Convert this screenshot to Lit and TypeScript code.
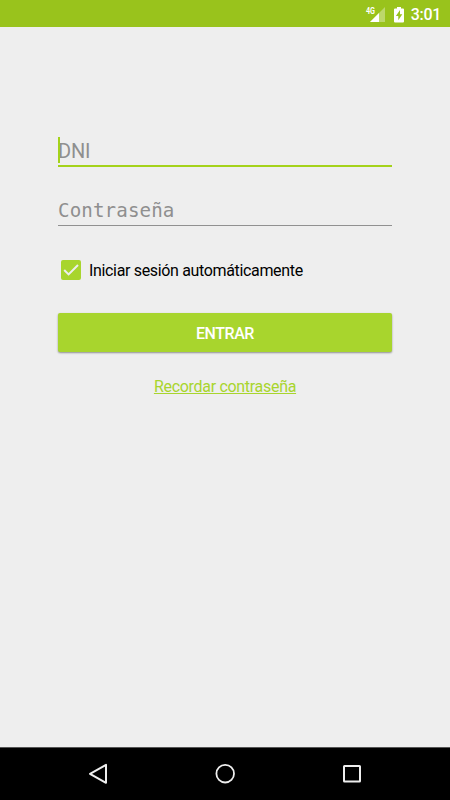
import { LitElement, html, css } from "lit";
import { customElement } from "lit/decorators.js";

@customElement("app-root")
export class AppRoot extends LitElement {
  static styles = css`
    :host {
      display: flex;
      flex-direction: column;
      height: 800px;
      background: #eeeeee;
      color: #000;
      font-family: Roboto, "Liberation Sans", sans-serif;
      overflow: hidden;
    }
    * { box-sizing: border-box; }
    svg { display: block; flex: none; overflow: visible; }
    .status {
      height: 27px;
      flex: none;
      display: flex;
      justify-content: flex-end;
      align-items: center;
      padding: 2px 9px 0 0;
      background: #99c31c;
      color: #fff;
    }
    .signal { margin-right: 9px; }
    .net { font: 700 9px Roboto, sans-serif; fill: #fff; }
    .time { font-size: 16px; letter-spacing: -0.3px; font-weight: 500; line-height: 24px; margin-left: 7px; }
    main { flex: 1; padding: 107px 58px 0; }
    .field {
      position: relative;
      font-size: 20px;
      line-height: 24px;
      color: #8f8f8f;
    }
    .dni { height: 33px; padding-top: 5px; border-bottom: 2px solid #a4d21a; letter-spacing: -0.2px; }
    .caret {
      position: absolute;
      left: 0;
      top: 3px;
      width: 2px;
      height: 26px;
      background: #a4d21a;
    }
    .pass {
      height: 29px;
      margin-top: 30px;
      padding-top: 2px;
      border-bottom: 1px solid #909090;
      font-family: "DejaVu Sans Mono", monospace;
      font-size: 19.2px;
      letter-spacing: 0.1px;
    }
    .check {
      display: flex;
      align-items: center;
      height: 20px;
      margin: 34px 0 0 3px;
      gap: 8px;
      font-size: 16px;
      letter-spacing: -0.34px;
      line-height: 20px;
      white-space: nowrap;
    }
    .check span { padding-top: 2px; }
    .enter {
      display: block;
      width: 334px;
      height: 39px;
      margin-top: 33px;
      padding: 2px 0 0;
      border: 0;
      border-radius: 2px;
      background: #a8d52d;
      box-shadow: 0 1px 2px rgba(0, 0, 0, 0.4);
      color: #fff;
      font: 500 16px/20px Roboto, sans-serif;
      letter-spacing: -0.45px;
    }
    .forgot {
      display: block;
      margin-top: 25px;
      text-align: center;
      font-size: 16px;
      letter-spacing: -0.3px;
      line-height: 20px;
      color: #a8d52d;
      text-decoration: underline;
      text-decoration-thickness: 1px;
    }
    nav {
      height: 53px;
      flex: none;
      background: #000;
      border-top: 1px solid #555;
      display: flex;
      justify-content: center;
      gap: 103px;
      padding-top: 14px;
    }
  `;

  render() {
    return html`
      <div class="status">
        <svg class="signal" width="20" height="16" viewBox="0 0 20 16">
          <path d="M20 0V15H5Z" fill="#fff" fill-opacity=".35" />
          <path d="M14 6V15H5Z" fill="#fff" />
          <text class="net" x="1" y="7" textLength="9" lengthAdjust="spacingAndGlyphs">4G</text>
        </svg>
        <svg width="10" height="16" viewBox="0 0 10 16">
          <path d="M3 0H7V1.5H9Q10 1.5 10 2.5V14.5Q10 15.5 9 15.5H1Q0 15.5 0 14.5V2.5Q0 1.5 1 1.5H3Z" fill="#fff" />
          <path d="M6 3L1.9 9.1H4.3V13.2L8.3 7.2H6Z" fill="#99c31c" />
        </svg>
        <span class="time">3:01</span>
      </div>
      <main>
        <div class="field dni">DNI<span class="caret"></span></div>
        <div class="field pass">Contraseña</div>
        <div class="check">
          <svg width="20" height="20" viewBox="0 0 20 20">
            <rect width="20" height="20" rx="2" fill="#a8d52d" />
            <path d="M3.2 10L7.6 14.4L17 5" fill="none" stroke="#eee" stroke-width="2" />
          </svg>
          <span>Iniciar sesión automáticamente</span>
        </div>
        <button class="enter">ENTRAR</button>
        <a class="forgot">Recordar contraseña</a>
      </main>
      <nav>
        <svg width="24" height="24" viewBox="0 0 24 24" fill="none" stroke="#eee" stroke-width="2" stroke-linejoin="round">
          <path d="M20 2.8V20.8L4 11.8Z" />
        </svg>
        <svg width="24" height="24" viewBox="0 0 24 24" fill="none" stroke="#eee" stroke-width="1.8">
          <circle cx="12.2" cy="11.7" r="8.8" />
        </svg>
        <svg width="24" height="24" viewBox="0 0 24 24" fill="none" stroke="#eee" stroke-width="2">
          <rect x="4" y="4" width="16" height="15.5" rx=".5" />
        </svg>
      </nav>
    `;
  }
}
